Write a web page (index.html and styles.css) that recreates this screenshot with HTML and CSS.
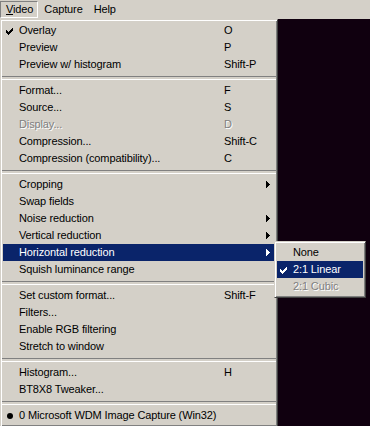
FILE: index.html
```html
<!DOCTYPE html>
<html>
<head>
<meta charset="utf-8">
<title>Video menu</title>
<link rel="stylesheet" href="styles.css">
</head>
<body>
<div class="window">
  <div class="menubar">
    <div class="mb-item pressed"><u>V</u>ideo</div>
    <div class="mb-item">Capture</div>
    <div class="mb-item">Help</div>
  </div>
  <div class="client">
    <div class="menu main-menu">
      <div class="item"><span class="mark"><svg class="check" width="7" height="7" viewBox="0 0 7 7"><path d="M0 2h1v3H0zM1 3h1v3H1zM2 4h1v3H2zM3 3h1v3H3zM4 2h1v3H4zM5 1h1v3H5zM6 0h1v3H6z" fill="currentColor"/></svg></span><span class="label">Overlay</span><span class="key">O</span></div>
      <div class="item"><span class="mark"></span><span class="label">Preview</span><span class="key">P</span></div>
      <div class="item"><span class="mark"></span><span class="label">Preview w/ histogram</span><span class="key">Shift-P</span></div>
      <div class="sep"></div>
      <div class="item"><span class="mark"></span><span class="label">Format...</span><span class="key">F</span></div>
      <div class="item"><span class="mark"></span><span class="label">Source...</span><span class="key">S</span></div>
      <div class="item disabled"><span class="mark"></span><span class="label">Display...</span><span class="key">D</span></div>
      <div class="item"><span class="mark"></span><span class="label">Compression...</span><span class="key">Shift-C</span></div>
      <div class="item"><span class="mark"></span><span class="label">Compression (compatibility)...</span><span class="key">C</span></div>
      <div class="sep"></div>
      <div class="item"><span class="mark"></span><span class="label">Cropping</span><span class="key"></span><svg class="arrow" width="4" height="7" viewBox="0 0 4 7"><path d="M0 0h1v7H0zM1 1h1v5H1zM2 2h1v3H2zM3 3h1v1H3z" fill="currentColor"/></svg></div>
      <div class="item"><span class="mark"></span><span class="label">Swap fields</span><span class="key"></span></div>
      <div class="item"><span class="mark"></span><span class="label">Noise reduction</span><span class="key"></span><svg class="arrow" width="4" height="7" viewBox="0 0 4 7"><path d="M0 0h1v7H0zM1 1h1v5H1zM2 2h1v3H2zM3 3h1v1H3z" fill="currentColor"/></svg></div>
      <div class="item"><span class="mark"></span><span class="label">Vertical reduction</span><span class="key"></span><svg class="arrow" width="4" height="7" viewBox="0 0 4 7"><path d="M0 0h1v7H0zM1 1h1v5H1zM2 2h1v3H2zM3 3h1v1H3z" fill="currentColor"/></svg></div>
      <div class="item hl"><span class="mark"></span><span class="label">Horizontal reduction</span><span class="key"></span><svg class="arrow" width="4" height="7" viewBox="0 0 4 7"><path d="M0 0h1v7H0zM1 1h1v5H1zM2 2h1v3H2zM3 3h1v1H3z" fill="currentColor"/></svg></div>
      <div class="item"><span class="mark"></span><span class="label">Squish luminance range</span><span class="key"></span></div>
      <div class="sep"></div>
      <div class="item"><span class="mark"></span><span class="label">Set custom format...</span><span class="key">Shift-F</span></div>
      <div class="item"><span class="mark"></span><span class="label">Filters...</span><span class="key"></span></div>
      <div class="item"><span class="mark"></span><span class="label">Enable RGB filtering</span><span class="key"></span></div>
      <div class="item"><span class="mark"></span><span class="label">Stretch to window</span><span class="key"></span></div>
      <div class="sep"></div>
      <div class="item"><span class="mark"></span><span class="label">Histogram...</span><span class="key">H</span></div>
      <div class="item"><span class="mark"></span><span class="label">BT8X8 Tweaker...</span><span class="key"></span></div>
      <div class="sep"></div>
      <div class="item"><span class="mark"><span class="bullet"></span></span><span class="label">0 Microsoft WDM Image Capture (Win32)</span><span class="key"></span></div>
    </div>
    <div class="menu sub-menu">
      <div class="item"><span class="mark"></span><span class="label">None</span></div>
      <div class="item hl"><span class="mark"><svg class="check" width="7" height="7" viewBox="0 0 7 7"><path d="M0 2h1v3H0zM1 3h1v3H1zM2 4h1v3H2zM3 3h1v3H3zM4 2h1v3H4zM5 1h1v3H5zM6 0h1v3H6z" fill="currentColor"/></svg></span><span class="label">2:1 Linear</span></div>
      <div class="item disabled"><span class="mark"></span><span class="label">2:1 Cubic</span></div>
    </div>
  </div>
</div>
</body>
</html>
```
FILE: styles.css
```css
* { box-sizing: border-box; }
html, body {
  margin: 0;
  padding: 0;
  width: 370px;
  height: 426px;
  overflow: hidden;
}
body {
  font-family: "Liberation Sans", Arial, sans-serif;
  font-size: 11px;
  letter-spacing: -0.12px;
  color: #000;
  background: #10000f;
}
.window {
  display: flex;
  flex-direction: column;
  height: 426px;
}
.menubar {
  display: flex;
  height: 19px;
  padding-top: 1px;
  background: #d4d0c8;
  flex: none;
}
.mb-item {
  height: 17px;
  line-height: 15px;
  padding: 0 4px 0 5px;
  border: 1px solid transparent;
  white-space: nowrap;
}
.mb-item.pressed {
  border-color: #808080 #fff #fff #808080;
}
.mb-item u { text-decoration: underline; }
.client {
  position: relative;
  flex: 1;
  background: #10000f;
}
.menu {
  position: absolute;
  background: #d4d0c8;
  border: 1px solid;
  border-color: #d4d0c8 #404040 #404040 #d4d0c8;
  box-shadow: inset 1px 1px 0 #fff, inset -1px -1px 0 #808080;
  padding: 2px;
}
.main-menu {
  left: 0;
  top: 0;
  width: 278px;
}
.sub-menu {
  left: 274px;
  top: 222px;
  width: 92px;
}
.item {
  display: flex;
  align-items: center;
  height: 17px;
  line-height: 17px;
  white-space: nowrap;
}
.item.hl {
  background: #0a246a;
  color: #fff;
}
.item.disabled {
  color: #808080;
  text-shadow: 1px 1px 0 #fff;
}
.mark {
  width: 16px;
  height: 17px;
  flex: none;
  display: flex;
  align-items: center;
  padding-left: 3px;
}
.check {
  display: block;
  margin-top: 1px;
}
.bullet {
  display: block;
  width: 6px;
  height: 6px;
  border-radius: 50%;
  background: #000;
  margin-left: 1px;
}
.label {
  width: 205px;
  flex: none;
}
.sub-menu .label {
  width: auto;
}
.key {
  flex: 1;
}
.arrow {
  display: block;
  flex: none;
  margin-right: 5px;
}
.sep {
  height: 9px;
  padding-top: 3px;
  margin: 0 -1px;
}
.sep::before {
  content: "";
  display: block;
  height: 2px;
  border-top: 1px solid #808080;
  border-bottom: 1px solid #fff;
}
```
